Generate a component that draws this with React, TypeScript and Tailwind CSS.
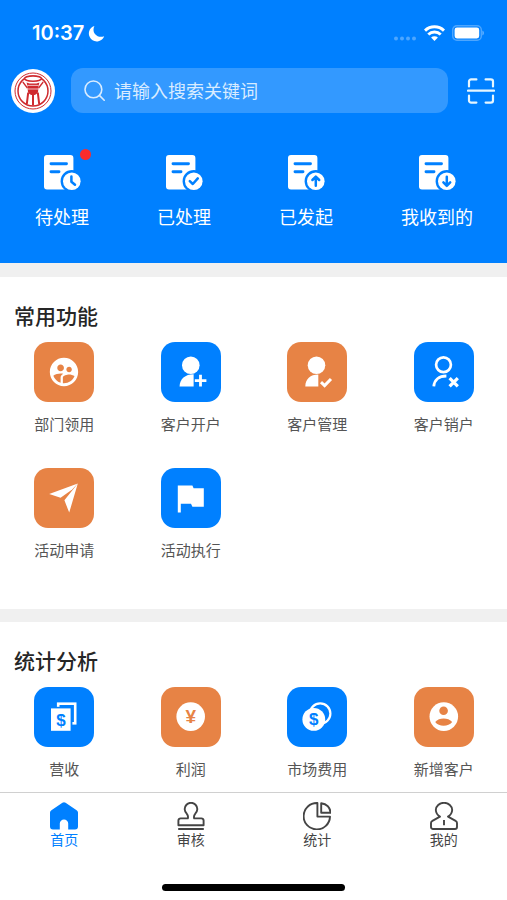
import { useState } from 'react';
import type { ReactNode } from 'react';
import { MdSupervisedUserCircle } from 'react-icons/md';

const BLUE = '#0080ff';
const ORANGE = '#e78345';

type Feature = {
  name: string;
  color: 'blue' | 'orange';
  icon: ReactNode;
};

// 单据图标，右下角圆形徽标内容由 children 传入
function DocIcon({ children }: { children: ReactNode }) {
  return (
    <svg width="37" height="35" viewBox="0 0 37 35" fill="none" aria-hidden="true">
      <rect width="29.4" height="34.4" rx="3" fill="white" />
      <path d="M7 8.7h15.5M7 16.7h8" stroke={BLUE} strokeWidth="2.9" strokeLinecap="round" />
      <circle cx="27.8" cy="26.2" r="11.2" fill={BLUE} />
      <circle cx="27.8" cy="26.2" r="8.8" fill="white" />
      <g stroke={BLUE} strokeWidth="2.5" strokeLinecap="round" strokeLinejoin="round">
        {children}
      </g>
    </svg>
  );
}

function TileSvg({ children }: { children: ReactNode }) {
  return (
    <svg className="h-full w-full" viewBox="0 0 60 60" fill="white" aria-hidden="true">
      {children}
    </svg>
  );
}

const quickItems = [
  { name: '待处理', dot: true, mark: <path d="M27.4 21.6v5.2l3.6 3" /> },
  { name: '已处理', dot: false, mark: <path d="M23.8 26.2l3 2.8 5-5.6" /> },
  { name: '已发起', dot: false, mark: <path d="M27.8 30.7v-9M24.4 25l3.4-3.4 3.4 3.4" /> },
  { name: '我收到的', dot: false, mark: <path d="M27.8 21.7v9M24.4 27.4l3.4 3.4 3.4-3.4" /> },
];

const commonFeatures: Feature[] = [
  {
    name: '部门领用',
    color: 'orange',
    icon: <MdSupervisedUserCircle className="size-[34px]" aria-hidden="true" />,
  },
  {
    name: '客户开户',
    color: 'blue',
    icon: (
      <TileSvg>
        <circle cx="29.8" cy="23.2" r="8.8" />
        <path d="M18.6 44.4c0-7.4 5.6-12.2 14-12.2v12.2z" />
        <path d="M39.5 32.8v11.8M33.8 38.7h11.6" stroke="white" strokeWidth="2.8" />
      </TileSvg>
    ),
  },
  {
    name: '客户管理',
    color: 'orange',
    icon: (
      <TileSvg>
        <circle cx="29.5" cy="23.2" r="8.8" />
        <path d="M18.3 44.4c0-7.4 5-12 13-12v12z" />
        <path d="M34 40.2l3.6 3.4 6.4-6.6" fill="none" stroke="white" strokeWidth="3" />
      </TileSvg>
    ),
  },
  {
    name: '客户销户',
    color: 'blue',
    icon: (
      <TileSvg>
        <circle cx="29.5" cy="22.8" r="7.4" fill="none" stroke="white" strokeWidth="2.7" />
        <path d="M19.8 44.4c.4-6.6 5.2-10.4 12.6-10.4" fill="none" stroke="white" strokeWidth="2.8" />
        <path d="M35.6 36.2l8.2 8.2M43.8 36.2l-8.2 8.2" stroke="white" strokeWidth="3.2" />
      </TileSvg>
    ),
  },
  {
    name: '活动申请',
    color: 'orange',
    icon: (
      <TileSvg>
        <path d="M15.2 26l28.6-10.4-5.6 5.8-11.6 8.4z" />
        <path d="M43.8 15.6l-8.6 29-4.8-12.4 8.4-10.4z" />
      </TileSvg>
    ),
  },
  {
    name: '活动执行',
    color: 'blue',
    icon: (
      <TileSvg>
        <path d="M16.8 17.4h14.6l1.2 2.8h10.2v18.6H31.4l-1.4-3H19.8v8.6h-3z" />
      </TileSvg>
    ),
  },
];

const statFeatures: Feature[] = [
  {
    name: '营收',
    color: 'blue',
    icon: (
      <TileSvg>
        <rect x="24.2" y="16.7" width="17" height="19.6" fill="none" stroke="white" strokeWidth="2.6" />
        <path d="M17 19.8h21.4v24H17z" fill={BLUE} />
        <path d="M17 21.4h19.6v22.4H17z" />
        <text x="26.9" y="38.8" fill={BLUE} fontSize="17" fontWeight="700" textAnchor="middle">$</text>
      </TileSvg>
    ),
  },
  {
    name: '利润',
    color: 'orange',
    icon: (
      <TileSvg>
        <circle cx="29.7" cy="29.6" r="14.3" />
        <text x="29.7" y="36" fill={ORANGE} fontSize="19" fontWeight="700" textAnchor="middle">¥</text>
      </TileSvg>
    ),
  },
  {
    name: '市场费用',
    color: 'blue',
    icon: (
      <TileSvg>
        <circle cx="33.2" cy="26.6" r="10.2" fill="none" stroke="white" strokeWidth="2.2" />
        <circle cx="26.8" cy="32.4" r="11.4" />
        <text x="26.8" y="38.2" fill={BLUE} fontSize="17" fontWeight="700" textAnchor="middle">$</text>
      </TileSvg>
    ),
  },
  {
    name: '新增客户',
    color: 'orange',
    icon: (
      <TileSvg>
        <circle cx="29.8" cy="29.6" r="14.3" />
        <circle cx="29.6" cy="23.8" r="4.3" fill={ORANGE} />
        <path d="M21.2 35c2.2-2.6 5-3.6 8.4-3.6s6.4 1 8.6 3.6c-2.2 2.6-5 3.8-8.6 3.8s-6.4-1.2-8.4-3.8z" fill={ORANGE} />
      </TileSvg>
    ),
  },
];

const tabs = [
  {
    name: '首页',
    icon: (
      <path
        d="M12.4.8a2.8 2.8 0 0 1 3.2 0l11 7.4A3.2 3.2 0 0 1 28 11V24.4a3 3 0 0 1-3 3H18.2V21.6a4.2 4.2 0 0 0-8.4 0v5.8H3a3 3 0 0 1-3-3V11a3.2 3.2 0 0 1 1.4-2.8z"
        fill="currentColor"
        stroke="none"
      />
    ),
  },
  {
    name: '审核',
    icon: (
      <path d="M10.8 16.4c.6-2 .2-3.2-1-4.6A6.3 6.3 0 1 1 18.2 11.8c-1.2 1.4-1.6 2.6-1 4.6h7.2a2.2 2.2 0 0 1 2.2 2.2v4.6H1.4v-4.6a2.2 2.2 0 0 1 2.2-2.2zM1.2 27h25.6" />
    ),
  },
  {
    name: '统计',
    icon: <path d="M14.4 1A13.2 13.2 0 1 0 27 14.6H14.4zM18.2 1.2v9.6h9.4c-.4-5.2-4-9-9.4-9.6z" />,
  },
  {
    name: '我的',
    icon: (
      <path d="M10 14.6A8.2 8.2 0 0 1 5.8 8a8.2 7.2 0 0 1 16.4 0 8.2 8.2 0 0 1-4.2 6.6l7.6 4.2a2.6 2.6 0 0 1 1.4 2.2V25a2 2 0 0 1-2 2H3a2 2 0 0 1-2-2v-4a2.6 2.6 0 0 1 1.4-2.2zM14 18v5.2" />
    ),
  },
];

function StatusBar() {
  return (
    <div className="flex h-[26px] items-center justify-between pr-[23px] pl-8">
      <div className="flex items-center gap-1">
        <span className="font-[Inter] text-xl font-semibold">10:37</span>
        <svg width="17" height="17" viewBox="0 0 17 17" fill="white" aria-hidden="true">
          <path d="M6.4 1A7.9 7.9 0 1 0 16.2 11.2C12.600 12.400 9.200 11.600 7.200 9.200 5.200 6.800 5 3.800 6.400 1z" />
        </svg>
      </div>
      <div className="flex items-center gap-[7px]">
        <svg width="24" height="16" viewBox="0 0 24 16" fill="white" fillOpacity="0.3" aria-hidden="true">
          <circle cx="3" cy="13.5" r="2" />
          <circle cx="9" cy="13.5" r="2" />
          <circle cx="15" cy="13.5" r="2" />
          <circle cx="21" cy="13.5" r="2" />
        </svg>
        <svg width="21" height="16" viewBox="0 0 21 16" fill="none" stroke="white" strokeWidth="3" aria-hidden="true">
          <path d="M1 5.6a13.8 13.8 0 0 1 19 0M4.3 9.5a9 9 0 0 1 12.4 0" />
          <path d="M10.5 16l-3.4-3.4a4.8 4.8 0 0 1 6.8 0z" fill="white" stroke="none" />
        </svg>
        <svg width="32" height="16" viewBox="0 0 32 16" aria-hidden="true">
          <rect x=".7" y=".7" width="28.6" height="14.6" rx="4.2" fill="none" stroke="white" strokeOpacity="0.3" strokeWidth="1.4" />
          <rect x="2.6" y="2.6" width="24.6" height="10.8" rx="2.4" fill="white" />
          <path d="M30.4 5.6c2 .8 2 4 0 4.8z" fill="white" fillOpacity="0.4" />
        </svg>
      </div>
    </div>
  );
}

function Logo() {
  return (
    <svg width="44" height="44" viewBox="0 0 44 44" fill="none" stroke="#cf2a2e" aria-hidden="true">
      <circle cx="22" cy="22" r="22" fill="white" stroke="none" />
      <circle cx="22" cy="22" r="18" strokeWidth="1" />
      <circle cx="22" cy="22" r="15" strokeWidth="1.5" />
      <ellipse cx="22" cy="9.6" rx="8.4" ry="2.6" fill="white" strokeWidth="1.5" />
      <path d="M15.6 13.4c3.4 1.6 9.4 1.6 12.8 0l-.8 3.4-.6 6.4c-2.4 3.8-7.6 3.8-10 0l-.6-6.4z" fill="#cf2a2e" stroke="none" />
      <path d="M16.4 16.4h11.2M17 20h10" stroke="white" strokeWidth=".7" />
      <path d="M17.2 23.6l-1.4 11.4M22 25.4v11M26.8 23.6l1.4 11.4" strokeWidth="2" />
      <path d="M11.8 13l4.6 6M32.2 13l-4.6 6" strokeWidth="1.3" />
    </svg>
  );
}

function FeatureGrid({ title, items }: { title: string; items: Feature[] }) {
  return (
    <>
      <h2 className="px-3.5 pt-[25px] text-[21px] leading-[30px] font-medium text-[#262626]">{title}</h2>
      <div className="mt-2.5 grid grid-cols-4 gap-y-[31px] pl-px">
        {items.map((item) => (
          <a key={item.name} href="#" className="flex flex-col items-center gap-[11px]">
            <span
              className={`flex size-[60px] items-center justify-center rounded-[14px] text-white ${
                item.color === 'blue' ? 'bg-[#0080ff]' : 'bg-[#e78345]'
              }`}
            >
              {item.icon}
            </span>
            <span className="text-[15px] leading-6 text-[#555555]">{item.name}</span>
          </a>
        ))}
      </div>
    </>
  );
}

export default function App() {
  const [activeTab, setActiveTab] = useState('首页');
  const [keyword, setKeyword] = useState('');

  return (
    <div className="flex min-h-screen flex-col bg-white font-['Liberation_Sans','Noto_Sans_CJK_SC',sans-serif]">
      {/* 顶部 */}
      <header className="bg-[#0080ff] pt-5 pb-[33px] text-white">
        <StatusBar />

        <div className="mt-[22px] flex items-center pr-3 pl-[11px]">
          <Logo />
          <label className="mr-[19px] ml-4 flex h-[45px] min-w-0 flex-1 items-center gap-[9px] rounded-xl bg-[#3399ff] px-[13px]">
            <svg width="21" height="21" viewBox="0 0 21 21" fill="none" stroke="#d9ecff" strokeWidth="1.6" strokeLinecap="round" aria-hidden="true">
              <circle cx="9.4" cy="9.4" r="8.4" />
              <path d="M15.4 15.4l4.8 4.8" />
            </svg>
            <input
              type="text"
              aria-label="请输入搜索关键词"
              placeholder="请输入搜索关键词"
              value={keyword}
              onChange={(e) => setKeyword(e.target.value)}
              className="min-w-0 flex-1 bg-transparent pt-0.5 text-lg leading-6 outline-none placeholder:text-[#d9ecff]"
            />
          </label>
          <button type="button" aria-label="扫一扫">
            <svg className="block" width="28" height="26" viewBox="0 0 28 26" fill="none" stroke="#e6f6ff" strokeWidth="2.2" strokeLinecap="round">
              <path d="M2 8.5V3.6a2.2 2.2 0 0 1 2.2-2.2H9.4M18.6 1.4h5.2A2.2 2.2 0 0 1 26 3.6V8.5M26 17.5v4.9a2.2 2.2 0 0 1-2.2 2.2H18.6M9.4 24.6H4.2A2.2 2.2 0 0 1 2 22.4V17.5" />
              <path d="M1 12.6h26" />
            </svg>
          </button>
        </div>

        <div className="mt-[42px] flex justify-around pl-px">
          {quickItems.map((item) => (
            <button key={item.name} type="button" className="flex flex-col items-center gap-4">
              <span className="relative">
                <DocIcon>{item.mark}</DocIcon>
                {item.dot && (
                  <span className="absolute -top-1.5 -right-2.5 size-[11px] rounded-full bg-[#fb2c2c]" />
                )}
              </span>
              <span className="text-lg leading-6">{item.name}</span>
            </button>
          ))}
        </div>
      </header>

      <main className="flex-1">
        {/* 常用功能 */}
        <section className="border-t-[14px] border-[#f0f0f0] pb-[46px]">
          <FeatureGrid title="常用功能" items={commonFeatures} />
        </section>

        {/* 统计分析 */}
        <section className="border-t-[13px] border-[#f0f0f0] pb-2.5">
          <FeatureGrid title="统计分析" items={statFeatures} />
        </section>
      </main>

      {/* 底部导航 */}
      <nav className="sticky bottom-0 border-t border-[#d0d0d0] bg-white pb-[9px]">
        <div className="grid grid-cols-4 pt-[9px] pl-px">
          {tabs.map((tab) => (
            <button
              key={tab.name}
              type="button"
              onClick={() => setActiveTab(tab.name)}
              className={`flex flex-col items-center ${
                activeTab === tab.name ? 'text-[#0080ff]' : 'text-[#444444]'
              }`}
            >
              <svg width="28" height="28" viewBox="0 0 28 28" fill="none" stroke="currentColor" strokeWidth="1.9" strokeLinejoin="round" aria-hidden="true">
                {tab.icon}
              </svg>
              <span className="text-sm leading-5">{tab.name}</span>
            </button>
          ))}
        </div>
        <div className="mx-auto mt-[34px] h-[7px] w-[36%] rounded-full bg-black" />
      </nav>
    </div>
  );
}
